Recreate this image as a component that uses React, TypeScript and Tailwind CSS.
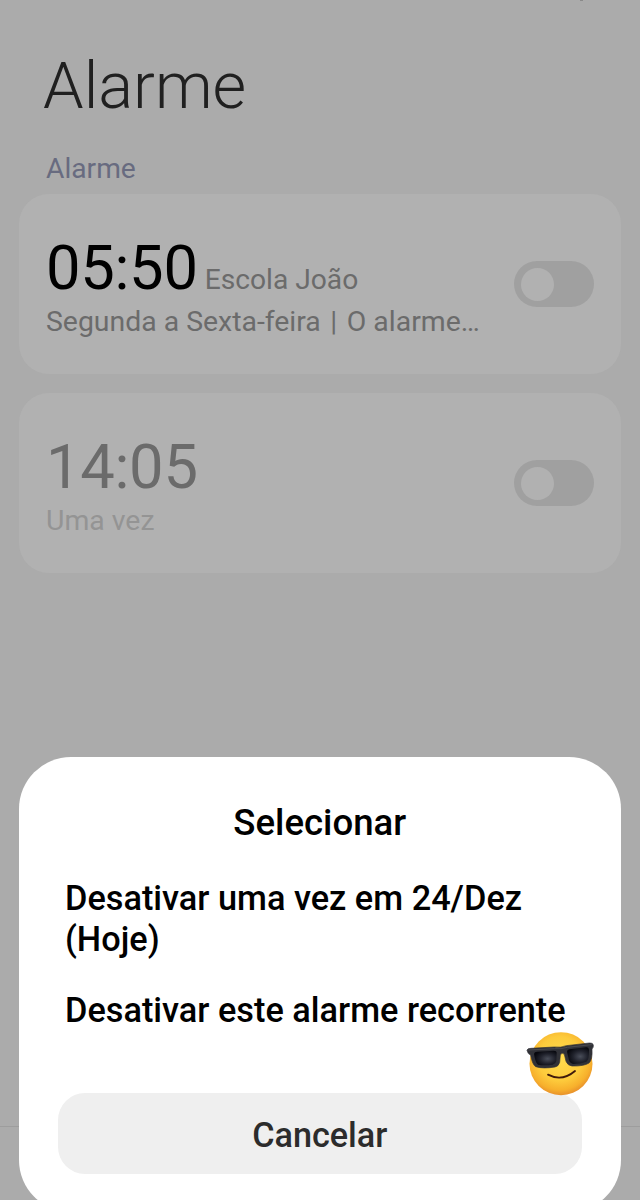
type Alarm = {
    time: string;
    label?: string;
    repeat: string;
    note?: string;
    dimmed?: boolean;
};

const alarms: Alarm[] = [
    { time: '05:50', label: 'Escola João', repeat: 'Segunda a Sexta-feira', note: 'O alarme…' },
    { time: '14:05', repeat: 'Uma vez', dimmed: true },
];

function Toggle() {
    return (
        <div className="w-[80px] h-[46px] rounded-full bg-[#a0a0a0] p-[6.5px] shrink-0">
            <div className="size-[33px] rounded-full bg-[#b1b1b1]" />
        </div>
    );
}

function AlarmCard({ alarm }: { alarm: Alarm }) {
    return (
        <div className="h-[180px] rounded-[30px] bg-[#b1b1b1] pl-[27px] pr-[27px] flex items-center justify-between">
            <div className="whitespace-nowrap pt-[6px]">
                <div className="flex items-baseline gap-[7px]">
                    <span className={`text-[61.5px] leading-[64px] tracking-[-0.3px] ${alarm.dimmed ? 'text-[#6b6b6b]' : 'text-black'}`}>
                        {alarm.time}
                    </span>
                    {alarm.label && <span className="text-[28.2px] leading-[34px] text-[#6b6b6b]">{alarm.label}</span>}
                </div>
                <div className={`mt-[5px] text-[28.4px] leading-[34px] ${alarm.dimmed ? 'text-[#949494]' : 'text-[#6b6b6b]'}`}>
                    {alarm.repeat}
                    {alarm.note && (
                        <>
                            {' '}
                            <span className="mx-[2.5px]">|</span> {alarm.note}
                        </>
                    )}
                </div>
            </div>
            <Toggle />
        </div>
    );
}

function CoolFace() {
    return (
        <svg viewBox="0 0 270 270" className="absolute left-[501px] top-[263px] size-[90px]">
            <defs>
                <radialGradient id="face" cx="0.48" cy="0.42" r="0.58">
                    <stop offset="0" stopColor="#ffdc4e" />
                    <stop offset="0.6" stopColor="#fdcb3c" />
                    <stop offset="0.86" stopColor="#f7b02c" />
                    <stop offset="1" stopColor="#e8912b" />
                </radialGradient>
                <radialGradient id="lens" cx="0.6" cy="0.55" r="0.6">
                    <stop offset="0" stopColor="#4a4e5a" />
                    <stop offset="0.55" stopColor="#20222c" />
                    <stop offset="1" stopColor="#07080e" />
                </radialGradient>
            </defs>
            <circle cx="123" cy="131" r="94.5" fill="url(#face)" />
            <path d="M84 164 Q126 186 165 153" fill="none" stroke="#3f1a0c" strokeWidth="5.5" strokeLinecap="round" />
            <path
                d="M21 91 Q22 85 33 85 L103 81 Q121 84 139 77 L208 69 Q219 68 220 75 Q221 83 216 87 Q218 119 207 129 Q192 139 156 138 Q143 137 138 124 L133 103 Q127 96 121 104 L119 127 Q116 139 105 141 Q69 147 47 140 Q37 134 32 106 Q23 102 21 91Z"
                fill="#303137"
                stroke="#303137"
                strokeWidth="2"
                strokeLinejoin="round"
            />
            <path d="M42 101 Q43 95 51 95 L101 92 Q110 92 110 98 L109 123 Q107 132 98 134 Q72 138 54 134 Q46 128 42 101Z" fill="url(#lens)" />
            <path d="M141 95 Q141 89 148 88 L198 82 Q206 81 207 89 Q208 119 199 125 Q182 132 160 132 Q151 131 147 121Z" fill="url(#lens)" />
            <path d="M26 90 L104 86 Q123 88 142 82 L214 74" fill="none" stroke="#4a4b50" strokeWidth="3" strokeLinecap="round" />
        </svg>
    );
}

function SelectSheet() {
    return (
        <div className="absolute left-[19px] top-[757px] w-[601.5px] h-[455px] rounded-[52px] bg-white px-[39px] pt-[45px]">
            <h2 className="text-center text-[36.6px] leading-[42px] font-medium text-black">Selecionar</h2>
            <div className="px-[7px] text-[34.3px] leading-[41px] font-medium text-black">
                <button className="block mt-[34px] text-left">
                    Desativar uma vez em 24/Dez
                    <br />
                    (Hoje)
                </button>
                <button className="block mt-[30px] text-left whitespace-nowrap">Desativar este alarme recorrente</button>
            </div>
            <button className="block mt-[62px] w-full h-[81px] pt-[3px] rounded-[27px] bg-[#efefef] text-[34.2px] leading-[41px] font-medium text-[#2c2c2c]">
                Cancelar
            </button>
            <CoolFace />
        </div>
    );
}

export default function App() {
    return (
        <div className="relative w-[640px] h-[1200px] overflow-hidden bg-[#ababab] font-['Roboto',sans-serif] flex flex-col">
            <div className="h-px w-[3px] ml-[580px] bg-[#8a8a8a]" />
            <h1 className="mt-[47px] ml-[43px] text-[65px] leading-[76px] font-light text-[#202020]">Alarme</h1>
            <div className="mt-[29px] ml-[46px] text-[28.2px] leading-[32px] text-[#686b80]">Alarme</div>
            <div className="mt-[9px] ml-[19px] w-[602px] flex flex-col gap-[19px]">
                {alarms.map((alarm) => (
                    <AlarmCard key={alarm.time} alarm={alarm} />
                ))}
            </div>
            <div className="mt-auto h-[74px] border-t border-[#9d9d9d]" />
            <SelectSheet />
        </div>
    );
}
